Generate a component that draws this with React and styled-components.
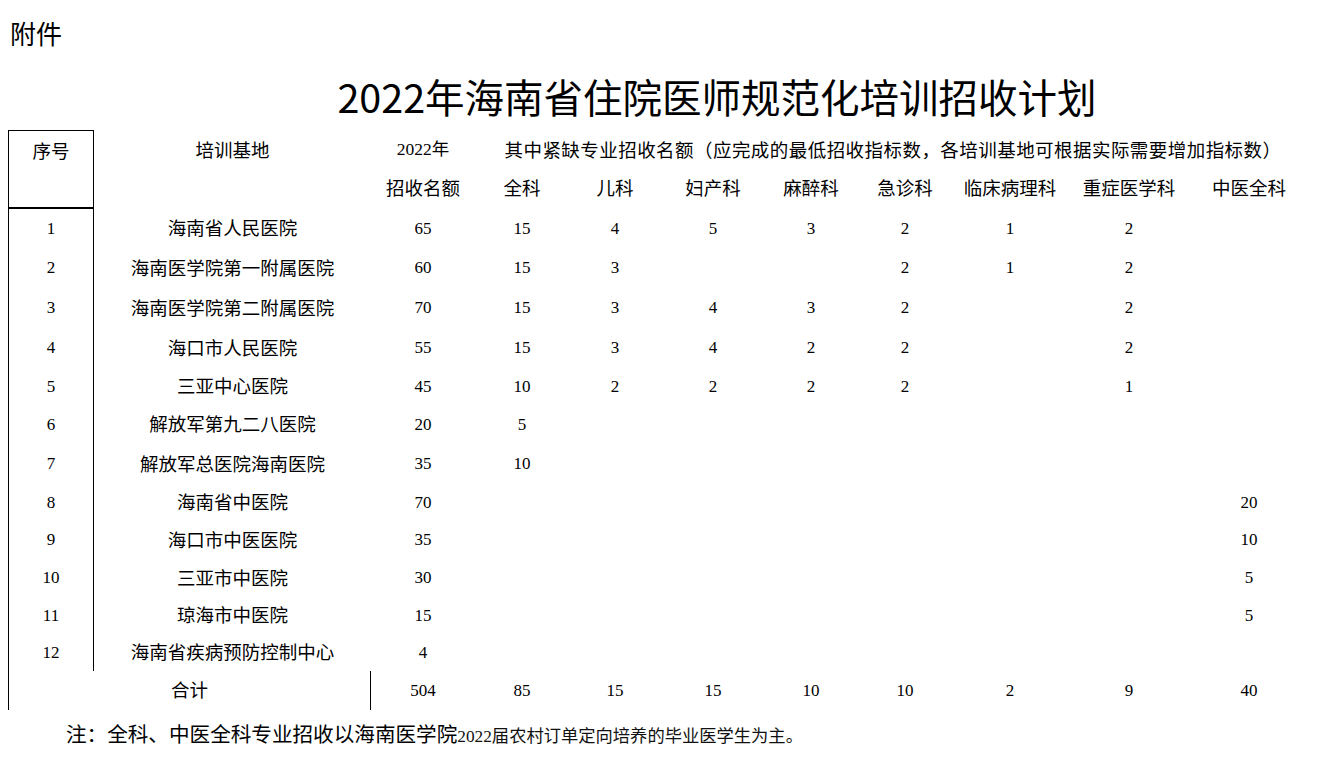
import styled, { createGlobalStyle } from 'styled-components'

const GlobalStyle = createGlobalStyle`
  body {
    margin: 0;
    background: #fff;
    color: #000;
    font-family: "Noto Sans CJK SC", sans-serif;
  }
`

const COLS = '85px 277px 104px 94px 92px 104px 92px 96px 114px 124px 116px'

const Page = styled.div`
  width: 1323px;
  height: 768px;
  overflow: hidden;
`

const Attachment = styled.div`
  padding: 16px 0 0 10px;
  height: 34px;
  font-size: 26px;
  line-height: 34px;
`

const Title = styled.h1`
  margin: 20px 0 8px;
  padding-left: 111px;
  height: 52px;
  font: 400 39.5px/52px "Noto Sans CJK SC", sans-serif;
  text-align: center;
`

const Table = styled.div`
  margin-left: 8px;
  width: fit-content;
  border-left: 1px solid #000;
`

const Head = styled.div`
  display: grid;
  grid-template-columns: ${COLS};
  grid-template-rows: 38px 41px;
`

const HeadCell = styled.div`
  grid-column: ${p => p.$col};
  grid-row: ${p => p.$row || 1};
  font-size: 18.5px;
  line-height: 38px;
  text-align: center;
  white-space: nowrap;
  ${p => p.$num && 'font-family: "Liberation Serif", "Noto Sans CJK SC", serif; font-size: 17.5px;'}
  ${p => p.$wide && 'letter-spacing: 0.45px; padding-left: 4px;'}
`

const IndexHead = styled(HeadCell)`
  box-sizing: border-box;
  border-top: 1px solid #000;
  border-right: 1px solid #000;
  border-bottom: 2px solid #000;
`

const Row = styled.div`
  display: grid;
  grid-template-columns: ${COLS};
  height: ${p => p.$h}px;
  align-items: center;
`

const Cell = styled.div`
  box-sizing: border-box;
  height: 100%;
  display: flex;
  align-items: center;
  justify-content: center;
  white-space: nowrap;
  font-size: ${p => (p.$num ? '17px' : '18.5px')};
  font-family: ${p => (p.$num ? '"Liberation Serif", serif' : '"Noto Sans CJK SC", sans-serif')};
  padding-bottom: ${p => (p.$num ? 0 : 3)}px;
  ${p => p.$ruled && 'border-right: 1px solid #000;'}
  ${p => p.$span && `grid-column: span ${p.$span};`}
`

const Note = styled.p`
  margin: 8px 0 0 66px;
  font-size: 20.6px;
  line-height: 30px;
`

const NoteTail = styled.span`
  font-family: "Liberation Serif", "Noto Sans CJK SC", serif;
  font-size: 17.3px;
  color: #111;
`

const specialties = ['全科', '儿科', '妇产科', '麻醉科', '急诊科', '临床病理科', '重症医学科', '中医全科']

const rows = [
  { h: 39, name: '海南省人民医院', total: 65, v: [15, 4, 5, 3, 2, 1, 2, ''] },
  { h: 40, name: '海南医学院第一附属医院', total: 60, v: [15, 3, '', '', 2, 1, 2, ''] },
  { h: 40, name: '海南医学院第二附属医院', total: 70, v: [15, 3, 4, 3, 2, '', 2, ''] },
  { h: 40, name: '海口市人民医院', total: 55, v: [15, 3, 4, 2, 2, '', 2, ''] },
  { h: 37, name: '三亚中心医院', total: 45, v: [10, 2, 2, 2, 2, '', 1, ''] },
  { h: 39, name: '解放军第九二八医院', total: 20, v: [5, '', '', '', '', '', '', ''] },
  { h: 40, name: '解放军总医院海南医院', total: 35, v: [10, '', '', '', '', '', '', ''] },
  { h: 37, name: '海南省中医院', total: 70, v: ['', '', '', '', '', '', '', 20] },
  { h: 38, name: '海口市中医医院', total: 35, v: ['', '', '', '', '', '', '', 10] },
  { h: 38, name: '三亚市中医院', total: 30, v: ['', '', '', '', '', '', '', 5] },
  { h: 37, name: '琼海市中医院', total: 15, v: ['', '', '', '', '', '', '', 5] },
  { h: 37, name: '海南省疾病预防控制中心', total: 4, v: ['', '', '', '', '', '', '', ''] },
]

const sums = [504, 85, 15, 15, 10, 10, 2, 9, 40]

export default function App() {
  return (
    <Page>
      <GlobalStyle />
      <Attachment>附件</Attachment>
      <Title>2022年海南省住院医师规范化培训招收计划</Title>

      <Table>
        <Head>
          <IndexHead $col="1" $row="1 / 3">序号</IndexHead>
          <HeadCell $col="2">培训基地</HeadCell>
          <HeadCell $col="3" $num>2022年</HeadCell>
          <HeadCell $col="4 / 12" $wide>其中紧缺专业招收名额（应完成的最低招收指标数，各培训基地可根据实际需要增加指标数）</HeadCell>
          <HeadCell $col="3" $row="2">招收名额</HeadCell>
          {specialties.map((s, i) => (
            <HeadCell key={s} $col={`${i + 4}`} $row="2">{s}</HeadCell>
          ))}
        </Head>

        {rows.map((r, i) => (
          <Row key={r.name} $h={r.h}>
            <Cell $num $ruled>{i + 1}</Cell>
            <Cell>{r.name}</Cell>
            <Cell $num>{r.total}</Cell>
            {r.v.map((n, j) => (
              <Cell key={j} $num>{n}</Cell>
            ))}
          </Row>
        ))}

        <Row $h={39}>
          <Cell $span={2} $ruled>合计</Cell>
          {sums.map((n, j) => (
            <Cell key={j} $num>{n}</Cell>
          ))}
        </Row>
      </Table>

      <Note>
        注：全科、中医全科专业招收以海南医学院<NoteTail>2022届农村订单定向培养的毕业医学生为主。</NoteTail>
      </Note>
    </Page>
  )
}
